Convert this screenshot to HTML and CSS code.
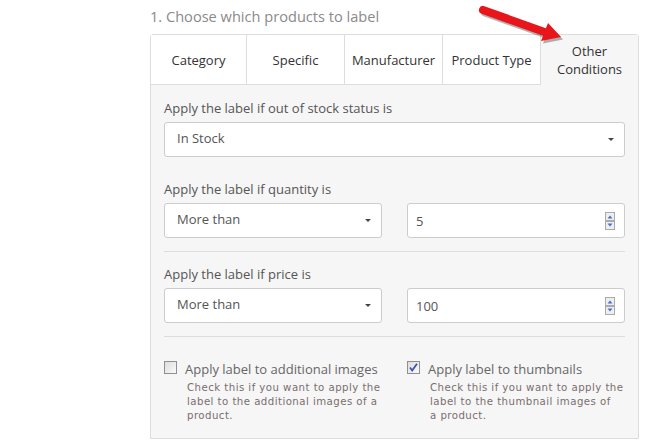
FILE: index.html
```
<!DOCTYPE html>
<html>
<head>
<meta charset="utf-8">
<link rel="stylesheet" href="styles.css">
</head>
<body>
<div class="wrap">
  <div class="title">1. Choose which products to label</div>
  <div class="panel">
    <div class="tabs">
      <div class="tab">Category</div>
      <div class="tab">Specific</div>
      <div class="tab">Manufacturer</div>
      <div class="tab">Product Type</div>
      <div class="tab active">Other<br>Conditions</div>
    </div>
    <div class="body">
      <div class="group">
        <div class="label">Apply the label if out of stock status is</div>
        <div class="select"><span>In Stock</span><i class="caret"></i></div>
      </div>
      <div class="group">
        <div class="label">Apply the label if quantity is</div>
        <div class="row">
          <div class="select"><span>More than</span><i class="caret"></i></div>
          <div class="num"><span>5</span>
            <svg class="spin" width="10" height="18" viewBox="0 0 10 18"><rect x="0.5" y="0.5" width="9" height="8" fill="#eee" stroke="#aaa"/><rect x="0.5" y="9.5" width="9" height="8" fill="#eee" stroke="#aaa"/><path d="M2.5 6.5 L5 3.5 L7.5 6.5 Z" fill="#4a6fc9"/><path d="M2.5 11.5 L5 14.5 L7.5 11.5 Z" fill="#4a6fc9"/></svg>
          </div>
        </div>
      </div>
      <hr class="sep">
      <div class="group">
        <div class="label">Apply the label if price is</div>
        <div class="row">
          <div class="select"><span>More than</span><i class="caret"></i></div>
          <div class="num"><span>100</span>
            <svg class="spin" width="10" height="18" viewBox="0 0 10 18"><rect x="0.5" y="0.5" width="9" height="8" fill="#eee" stroke="#aaa"/><rect x="0.5" y="9.5" width="9" height="8" fill="#eee" stroke="#aaa"/><path d="M2.5 6.5 L5 3.5 L7.5 6.5 Z" fill="#4a6fc9"/><path d="M2.5 11.5 L5 14.5 L7.5 11.5 Z" fill="#4a6fc9"/></svg>
          </div>
        </div>
      </div>
      <hr class="sep">
      <div class="row checks">
        <div class="check">
          <svg class="cb" width="13" height="13" viewBox="0 0 13 13"><defs><linearGradient id="g1" x1="0" y1="0" x2="1" y2="1"><stop offset="0" stop-color="#dcdcdc"/><stop offset="1" stop-color="#fbfbfb"/></linearGradient></defs><rect x="0.5" y="0.5" width="12" height="12" fill="url(#g1)" stroke="#8f8f8f"/></svg>
          <div class="ctext">
            <div class="clabel">Apply label to additional images</div>
            <div class="help">Check this if you want to apply the<br>label to the additional images of a<br>product.</div>
          </div>
        </div>
        <div class="check">
          <svg class="cb" width="13" height="13" viewBox="0 0 13 13"><defs><linearGradient id="g2" x1="0" y1="0" x2="1" y2="1"><stop offset="0" stop-color="#dcdcdc"/><stop offset="1" stop-color="#fbfbfb"/></linearGradient></defs><rect x="0.5" y="0.5" width="12" height="12" fill="url(#g2)" stroke="#8f8f8f"/><path d="M3 6.5 L5.2 9.5 L10 2.8" fill="none" stroke="#3d56a8" stroke-width="1.8"/></svg>
          <div class="ctext">
            <div class="clabel">Apply label to thumbnails</div>
            <div class="help">Check this if you want to apply the<br>label to the thumbnail images of<br>a product.</div>
          </div>
        </div>
      </div>
    </div>
  </div>
</div>
<svg class="arrow" width="100" height="50" viewBox="0 0 100 50">
  <path d="M11.4 4.2 L72.9 26.2 L75 21 L88 35 L68 39 L70.1 33.8 L8.6 11.8 A4 4 0 0 1 11.4 4.2 Z" fill="#222" opacity="0.35" transform="translate(2,2.5)"/>
  <path d="M11.4 4.2 L72.9 26.2 L75 21 L88 35 L68 39 L70.1 33.8 L8.6 11.8 A4 4 0 0 1 11.4 4.2 Z" fill="#e8161b"/>
</svg>
</body>
</html>
```
FILE: styles.css
```
body {
  margin: 0;
  background: #fff;
  font-family: "Open Sans", "Liberation Sans", sans-serif;
}
.wrap {
  margin-left: 150px;
  width: 489px;
  padding-top: 6px;
}
.title {
  font-size: 14.6px;
  line-height: 20px;
  color: #8a8a8a;
  margin-bottom: 8px;
}
.panel {
  border: 1px solid #dddddd;
  border-radius: 3px 3px 0 0;
  background: #f6f6f6;
}
.tabs {
  display: grid;
  grid-template-columns: 96px 98px 98px 98px 1fr;
  height: 50px;
}
.tab {
  display: flex;
  align-items: center;
  justify-content: center;
  text-align: center;
  font-size: 13px;
  line-height: 18px;
  color: #333;
  background: #fff;
  border-right: 1px solid #dddddd;
  border-bottom: 1px solid #dddddd;
}
.tab.active {
  background: #f6f6f6;
  border-right: none;
  border-bottom: none;
}
.body {
  padding: 14px 13px 15px 13px;
}
.group + .group {
  margin-top: 23px;
}
.label {
  font-size: 13px;
  line-height: 18px;
  color: #555;
  margin-bottom: 5px;
}
.select, .num {
  box-sizing: border-box;
  height: 35px;
  background: #fff;
  border: 1px solid #cccccc;
  border-radius: 3px;
  display: flex;
  align-items: center;
  font-size: 13px;
  color: #555;
}
.select {
  padding: 0 10px 0 12px;
  justify-content: space-between;
}
.select span {
  margin-top: -3px;
}
.caret {
  width: 0;
  height: 0;
  border-left: 3px solid transparent;
  border-right: 3px solid transparent;
  border-top: 3px solid #444;
}
.num {
  padding: 0 9px 0 8px;
  justify-content: space-between;
}
.num span {
  margin-top: 1px;
}
.row {
  display: grid;
  grid-template-columns: 218px 218px;
  justify-content: space-between;
}
.sep {
  border: none;
  border-top: 1px solid #dddddd;
  height: 0;
  margin: 13px 0 13px 0;
}
.checks {
  margin-top: 23px;
}
.check {
  display: flex;
  align-items: flex-start;
}
.cb {
  flex: none;
  margin-top: 1px;
  margin-right: 8px;
}
.ctext {
  flex: 1;
}
.clabel {
  font-size: 13px;
  line-height: 18px;
  color: #666;
}
.help {
  font-family: "DejaVu Sans", Verdana, sans-serif;
  font-size: 10.2px;
  line-height: 14px;
  color: #7a6e6e;
  padding-left: 2px;
  margin-top: 3px;
  letter-spacing: 0.45px;
  white-space: nowrap;
}
.arrow {
  position: absolute;
  left: 473px;
  top: 2px;
}
```
